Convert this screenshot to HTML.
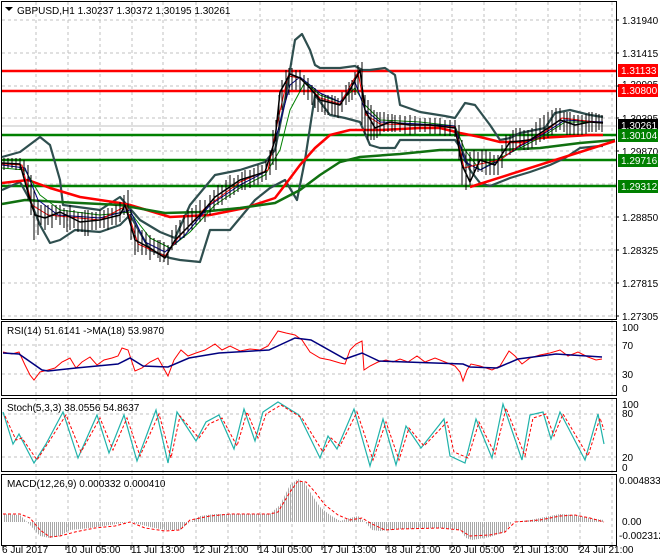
<!DOCTYPE html>
<html><head><meta charset="utf-8"><style>
html,body{margin:0;padding:0;background:#fff;width:660px;height:560px;overflow:hidden}
svg{display:block;font-family:"Liberation Sans",sans-serif;font-size:10px}
</style></head><body>
<svg width="660" height="560" viewBox="0 0 660 560" xmlns="http://www.w3.org/2000/svg">
<defs>
<pattern id="hist" width="2" height="10" patternUnits="userSpaceOnUse"><rect x="0" y="0" width="1" height="10" fill="#a8a8a8"/></pattern>
</defs>
<rect width="660" height="560" fill="#fff"/>
<g stroke="#c0c0c0" stroke-dasharray="3,3" stroke-width="1">
<path d="M36 2V545M68 2V545M100 2V545M132 2V545M163 2V545M196 2V545M228 2V545M260 2V545M292 2V545M324 2V545M356 2V545M388 2V545M420 2V545M452 2V545M484 2V545M516 2V545M548 2V545M580 2V545M612 2V545"/>
<path d="M2 20H616M2 53H616M2 86H616M2 118H616M2 151H616M2 184H616M2 217H616M2 250H616M2 283H616M2 316H616"/>
<path d="M2 345H616M2 374H616M2 414H616M2 457H616"/>
</g>
<g fill="none" stroke="#000" stroke-width="1">
<rect x="1.5" y="1.5" width="615" height="318"/>
<rect x="1.5" y="321.5" width="615" height="74"/>
<rect x="1.5" y="398.5" width="615" height="73"/>
<rect x="1.5" y="474.5" width="615" height="71"/>
</g>
<line x1="2" y1="126" x2="616" y2="126" stroke="#c0c0c0"/>
<g stroke-width="2.5">
<line x1="2" y1="71" x2="616" y2="71" stroke="#ff0000"/>
<line x1="2" y1="91" x2="616" y2="91" stroke="#ff0000"/>
<line x1="2" y1="135" x2="616" y2="135" stroke="#008000"/>
<line x1="2" y1="160" x2="616" y2="160" stroke="#008000"/>
<line x1="2" y1="186" x2="616" y2="186" stroke="#008000"/>
</g>
<g fill="none" stroke-linejoin="round">
<path stroke="#2f4f4f" stroke-width="2.2" d="M2 157L20 152L40 137L50 145L60 180L63 205L100 210L120 197L140 220L160 232L175 238L190 205L215 175L240 170L265 162L275 150L285 100L295 40L302 34L310 50L315 65L320 68L340 68L355 66L362 70L370 70L385 68L395 75L400 105L420 112L445 116L455 118L465 103L475 105L490 125L500 140L510 138L520 133L545 128L555 113L570 110L590 115L603 117"/>
<path stroke="#2f4f4f" stroke-width="2.2" d="M2 190L20 182L30 200L40 225L50 243L60 240L75 230L100 232L120 225L130 215L150 250L170 258L180 260L200 262L210 230L230 230L255 200L270 188L285 180L297 200L305 160L315 95L330 115L345 118L360 122L370 145L380 148L395 148L400 140L420 140L445 140L455 140L462 150L470 170L480 183L490 186L510 178L530 172L550 165L565 158L580 148L600 146L603 146"/>
<path stroke="#ff0000" stroke-width="2.5" d="M2 183L28 180L50 188L80 197L120 203L130 205L170 217L210 215L245 208L275 198L285 185L300 165L315 148L330 135L350 130L380 130L420 128L440 128L460 133L480 137L500 142L520 142L540 138L590 135L603 135"/>
<path stroke="#107010" stroke-width="2.5" d="M2 204L25 200L60 202L120 205L165 213L200 212L240 208L275 203L300 190L320 175L340 162L360 157L400 154L440 150L460 150L500 150L540 148L580 143L615 140"/>
<path stroke="#ff0000" stroke-width="2.5" d="M470 187L615 141"/>
<path stroke="#008000" stroke-width="1" d="M2 168L25 170L40 195L60 210L100 215L130 212L150 238L170 248L190 232L215 205L240 188L265 175L280 150L290 110L305 82L320 95L340 102L355 88L365 105L380 120L420 122L455 126L465 150L480 170L500 158L520 148L545 135L565 122L603 122"/>
<path stroke="#000080" stroke-width="1" d="M2 165L25 168L38 200L58 215L100 218L130 210L145 242L165 252L185 235L210 205L240 185L265 172L278 130L290 85L300 77L320 93L340 102L355 82L365 110L380 122L420 124L455 126L465 162L480 170L500 160L520 146L545 133L565 120L603 122"/>
<path stroke="#ff0000" stroke-width="1" d="M2 164L22 165L32 205L48 215L100 220L126 206L138 244L165 256L178 238L205 208L240 182L268 170L278 120L288 76L300 78L320 98L340 104L358 72L366 115L380 124L420 125L455 127L464 168L480 164L500 160L520 145L545 132L562 118L603 123"/>
</g>
<path fill="none" stroke="#000" stroke-width="1.5" stroke-linejoin="round" d="M2 163L20 164L30 200L35 215L45 218L60 212L80 222L100 220L120 215L125 205L135 240L150 248L165 258L175 240L200 215L215 197L240 180L265 172L275 140L280 92L290 74L300 78L310 88L320 100L340 105L350 90L360 70L365 110L375 128L390 122L410 125L430 125L455 128L462 165L470 182L480 160L495 165L510 142L530 140L545 130L560 120L575 125L590 122L603 123"/>
<g stroke="#000" stroke-width="1">
<path d="M4 158V170M8 158V168M12 158V168M16 158V170M20 158V170M24 160V175M28 165V200M31 175V215M34 190V240M38 200V235M41 205V225M45 205V230M48 205V225M52 205V228M56 205V220M60 205V225M64 208V228M67 210V232M70 205V230M74 210V228M78 212V232M82 212V232M85 210V236M88 210V236M92 212V230M96 212V230M100 210V228M104 210V228M108 208V230M112 208V225M116 205V225M120 202V222M124 195V215M128 190V215M131 210V240M135 225V255M138 230V252M142 230V255M146 232V255M150 235V260M154 238V255M158 240V258M160 240V262M164 242V262M168 245V265M172 230V250M176 225V245M180 220V240M184 215V238M188 210V232M192 208V230M196 205V225M200 200V222M205 200V222M210 195V215M214 190V210M218 185V205M222 185V205M226 180V200M230 175V198M234 178V195M238 175V192M242 172V190M245 170V190M250 170V188M254 168V185M258 165V185M262 165V182M266 160V180M270 150V175M273 130V165M276 120V170M279 95V130M282 80V110M286 70V100M289 68V95M292 68V90M296 70V90M300 70V92M304 75V95M308 78V100M312 85V105M315 88V108M318 92V112M322 94V112M325 95V115M328 95V115M332 95V115M335 96V116M338 98V118M342 92V112M346 85V105M349 82V102M352 80V100M355 72V95M358 65V90M362 62V125M365 95V135M368 100V140M371 105V140M374 110V140M377 112V138M380 112V135M384 112V132M388 114V132M392 114V132M395 115V132M400 115V132M405 116V134M410 115V135M415 116V134M420 118V132M425 118V132M430 118V134M435 118V134M440 118V135M445 120V136M450 120V136M455 120V137M459 125V160M462 140V185M466 150V190M470 152V185M474 150V175M478 152V172M482 150V172M486 150V175M490 152V175M494 155V175M498 155V175M502 145V168M506 135V155M510 135V155M513 130V152M516 128V150M520 128V148M524 130V150M528 130V150M532 128V148M536 122V145M540 118V142M544 115V140M548 112V138M552 110V135M556 108V132M560 108V130M564 112V132M567 112V135M570 112V135M574 115V135M578 115V135M582 115V135M586 114V134M589 112V132M592 112V132M596 113V132M599 114V130M602 115V132"/>
</g>
<path d="M5 7L13 7L9 11Z" fill="#000"/>
<text x="17" y="14" fill="#000">GBPUSD,H1  1.30237 1.30372 1.30195 1.30261</text>
<g fill="#000">
<text x="622" y="24">1.31940</text>
<text x="622" y="57">1.31415</text>
<text x="622" y="88">1.30905</text>
<text x="622" y="122">1.30395</text>
<text x="622" y="155">1.29870</text>
<text x="622" y="221">1.28850</text>
<text x="622" y="254">1.28325</text>
<text x="622" y="287">1.27815</text>
<text x="622" y="320">1.27305</text>
</g>
<rect x="618" y="64" width="40" height="13" fill="#ff0000"/><text x="621" y="74" fill="#fff">1.31133</text>
<rect x="618" y="84" width="40" height="13" fill="#ff0000"/><text x="621" y="94" fill="#fff">1.30800</text>
<rect x="618" y="119" width="40" height="13" fill="#000"/><text x="621" y="129" fill="#fff">1.30261</text>
<rect x="618" y="129" width="40" height="13" fill="#008000"/><text x="621" y="139" fill="#fff">1.30104</text>
<rect x="618" y="154" width="40" height="13" fill="#008000"/><text x="621" y="164" fill="#fff">1.29716</text>
<rect x="618" y="180" width="40" height="13" fill="#008000"/><text x="621" y="190" fill="#fff">1.29312</text>
<g stroke="#000"><path d="M616 20h3M616 53h3M616 86h3M616 118h3M616 151h3M616 217h3M616 250h3M616 283h3M616 316h3"/></g>

<text x="7" y="334" fill="#000">RSI(14) 51.6141  -&gt;MA(18) 53.9870</text>
<path fill="none" stroke="#ff0000" stroke-width="1" d="M3 352L12 354L19 352L25 365L30 375L34 380L40 372L48 370L55 368L62 362L70 358L76 368L82 362L90 357L97 365L104 360L112 358L118 356L122 348L128 350L135 371L142 368L150 362L158 358L163 367L168 376L174 360L181 350L188 356L196 353L205 350L215 344L222 350L230 346L240 351L250 349L260 350L268 346L278 331L286 333L295 335L302 340L310 352L320 358L330 360L340 363L345 364L350 350L356 344L362 341L364 370L370 366L378 362L386 360L393 362L400 359L408 362L417 356L425 362L435 358L445 362L455 366L460 372L463 381L467 370L471 364L480 366L492 370L500 366L509 351L515 356L522 364L530 358L540 355L550 353L560 350L568 356L578 352L588 357L596 360L602 359"/>
<path fill="none" stroke="#00007f" stroke-width="1.5" d="M3 353L19 354L42 370L48 371L76 368L118 364L130 358L143 366L168 367L189 358L219 353L269 350L295 338L311 340L345 359L362 353L379 361L463 364L470 367L497 368L518 359L556 354L602 357"/>
<g fill="#000"><text x="622" y="331">100</text><text x="622" y="349">70</text><text x="622" y="378">30</text><text x="622" y="392">0</text></g>

<text x="7" y="411" fill="#000">Stoch(5,3,3) 38.0556 54.8637</text>
<path fill="none" stroke="#20b2aa" stroke-width="1.2" d="M3 412L13 444L19 434L34 463L46 444L63 412L78 458L97 415L109 453L124 415L137 461L156 410L168 463L177 412L196 441L206 422L219 415L234 449L244 409L255 441L263 412L278 402L299 415L320 458L328 436L337 449L354 409L370 466L383 419L396 465L406 426L421 448L444 419L450 456L465 463L476 419L492 458L503 404L522 460L530 415L543 412L551 439L560 412L585 460L598 414L604 444"/>
<path fill="none" stroke="#ff0000" stroke-width="1" stroke-dasharray="3,2" d="M5 416L16 440L22 438L37 460L50 440L66 415L81 452L100 418L113 450L127 418L140 456L159 414L171 458L180 416L199 438L209 424L222 418L237 446L247 412L258 438L266 414L281 405L302 418L323 452L331 438L340 446L357 412L373 460L386 422L399 460L409 428L424 446L447 422L454 452L468 458L479 422L495 454L506 408L525 456L533 418L546 414L554 436L563 414L588 456L600 418L604 430"/>
<g fill="#000"><text x="622" y="408">100</text><text x="622" y="417">80</text><text x="622" y="461">20</text><text x="622" y="471">0</text></g>

<text x="7" y="487" fill="#000">MACD(12,26,9) 0.000332 0.000410</text>
<path fill="url(#hist)" d="M3 522L3 514L20 515L30 525L40 536L50 538L60 536L70 530L90 528L110 525L130 522L150 527L165 530L180 530L190 522L200 516L215 514L240 514L270 514L280 505L290 485L298 479L305 483L312 495L320 507L330 515L340 521L350 518L358 516L365 522L372 530L380 531L400 529L440 528L460 530L466 538L472 540L490 537L505 532L512 522L530 520L545 517L560 514L575 515L590 518L604 520L604 522Z"/>
<path fill="none" stroke="#ff0000" stroke-width="1" stroke-dasharray="3,2" d="M3 514L20 514L30 518L40 530L50 537L60 536L75 532L95 528L115 526L130 522L145 528L165 531L180 530L190 520L210 516L230 514L270 514L278 512L290 492L298 481L306 482L315 492L325 505L338 515L350 520L362 518L372 524L385 530L400 529L440 528L460 530L470 536L490 535L505 532L515 522L540 520L560 516L575 515L590 518L604 522"/>
<g fill="#000"><text x="619" y="484">0.004833</text><text x="622" y="525">0.00</text><text x="619" y="539">-0.002312</text></g>

<g stroke="#000"><path d="M3 546v4M66 546v4M131 546v4M194 546v4M258 546v4M322 546v4M386 546v4M450 546v4M514 546v4M579 546v4"/></g>
<g fill="#000">
<text x="2" y="553">6 Jul 2017</text>
<text x="66" y="553">10 Jul 05:00</text>
<text x="131" y="553">11 Jul 13:00</text>
<text x="194" y="553">12 Jul 21:00</text>
<text x="258" y="553">14 Jul 05:00</text>
<text x="322" y="553">17 Jul 13:00</text>
<text x="386" y="553">18 Jul 21:00</text>
<text x="450" y="553">20 Jul 05:00</text>
<text x="514" y="553">21 Jul 13:00</text>
<text x="579" y="553">24 Jul 21:00</text>
</g>
</svg>
</body></html>
